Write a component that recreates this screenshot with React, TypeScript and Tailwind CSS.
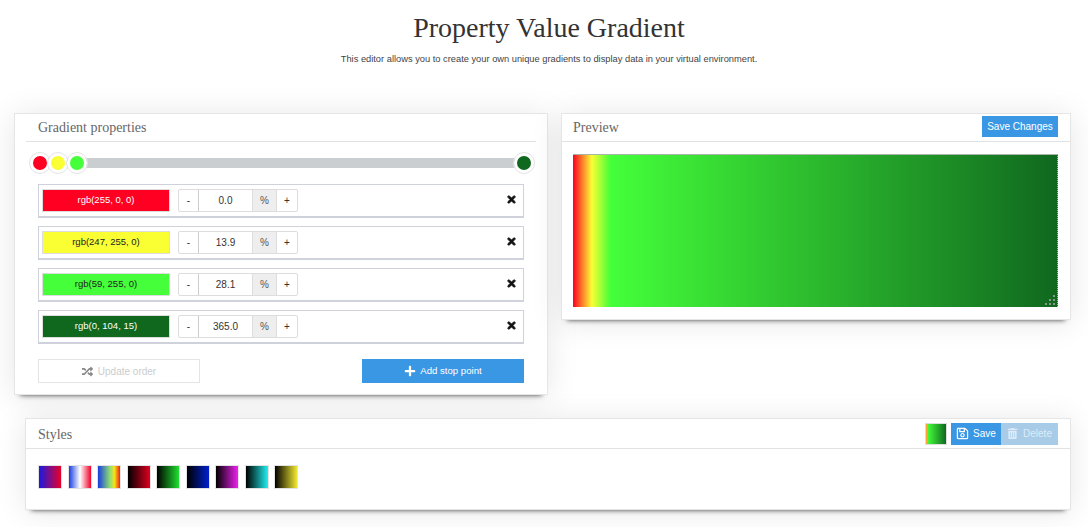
import { FaPlus, FaRandom, FaRegSave, FaTimes, FaTrashAlt } from "react-icons/fa";

const stops = [
  { color: "rgb(255, 0, 0)", bg: "bg-[#ff0022]", text: "text-white", value: "0.0" },
  { color: "rgb(247, 255, 0)", bg: "bg-[#f9ff33]", text: "text-[#222]", value: "13.9" },
  { color: "rgb(59, 255, 0)", bg: "bg-[#44ff3a]", text: "text-[#222]", value: "28.1" },
  { color: "rgb(0, 104, 15)", bg: "bg-[#10681f]", text: "text-white", value: "365.0" },
];

const mainGradient = "linear-gradient(to right, #ff0022 0%, #f9ff33 3.9%, #44ff3a 7.7%, #10681f 100%)";

const styles = [
  "linear-gradient(to right, #1a1ae0, #e8002a)",
  "linear-gradient(to right, #1a3de0, #ffffff 50%, #f0002a)",
  "linear-gradient(to right, #1a3de0, #90e070 55%, #f5e020 75%, #f02010)",
  "linear-gradient(to right, #000000, #e00020)",
  "linear-gradient(to right, #000000, #20e030)",
  "linear-gradient(to right, #000000, #0020d0)",
  "linear-gradient(to right, #000000, #f020f0)",
  "linear-gradient(to right, #000000, #20f0f0)",
  "linear-gradient(to right, #000000, #f0e830)",
];

const panel =
  "bg-white border border-[#e6e6e6] shadow-[0_6px_5px_-6px_rgba(0,0,0,0.75),0_2px_30px_rgba(0,0,0,0.1)]";
const heading = "font-['Liberation_Serif',serif] text-[14px] text-[#666]";

function Handle({ bg, x }: { bg: string; x: string }) {
  return (
    <span
      className={`absolute top-1/2 -translate-y-1/2 w-[20px] h-[20px] rounded-full border-[3px] border-white outline outline-[#e4e4e4] ${bg} ${x}`}
    />
  );
}

export default function App() {
  return (
    <div className="w-[1088px] h-[527px] overflow-hidden bg-white font-['Liberation_Sans',sans-serif]">
      <div className="flex flex-col items-center pt-[10px] pl-[10px]">
        <h1 className="font-['Liberation_Serif',serif] text-[28px] leading-[36px] text-[#333]">
          Property Value Gradient
        </h1>
        <p className="mt-[6px] text-[9.3px] leading-[14px] text-[#444]">
          This editor allows you to create your own unique gradients to display data in your virtual environment.
        </p>
      </div>

      <div className="flex items-start gap-[13px] pl-[14px] mt-[47px]">
        {/* gradient properties */}
        <section className={`${panel} w-[534px] h-[282px] px-[11px]`}>
          <div className={`${heading} h-[28px] pl-[12px] pt-[5px] leading-[18px] border-b border-[#e2e2e2]`}>
            Gradient properties
          </div>
          <div className="relative h-[10px] mt-[16px] ml-[14px] mr-[13px] bg-[#cbced1] rounded-sm">
            <Handle bg="bg-[#ff0022]" x="left-[-10px]" />
            <Handle bg="bg-[#f9ff33]" x="left-[8px]" />
            <Handle bg="bg-[#44ff3a]" x="left-[27px]" />
            <Handle bg="bg-[#10681f]" x="right-[-11px]" />
          </div>

          <div className="flex flex-col gap-[8px] mt-[16px] mx-[12px]">
            {stops.map((s) => (
              <div
                key={s.color}
                className="flex items-center h-[34px] pl-[3px] pr-[6px] border border-[#cfd2da] border-b-2"
              >
                <div
                  className={`w-[128px] h-[23px] flex items-center justify-center text-[9.5px] border border-[#ddd] ${s.bg} ${s.text}`}
                >
                  {s.color}
                </div>
                <div className="flex ml-[8px] h-[23px] w-[120px] border border-[#ddd] rounded-[2px] text-[10px] text-[#333]">
                  <span className="w-[20px] flex items-center justify-center border-r border-[#ccc]">-</span>
                  <span className="w-[53px] flex items-center justify-center">{s.value}</span>
                  <span className="w-[25px] flex items-center justify-center bg-[#eee] border-x border-[#ddd] text-[#555]">
                    %
                  </span>
                  <span className="flex-1 flex items-center justify-center">+</span>
                </div>
                <FaTimes className="ml-auto mt-[-2px] text-[11px] text-[#111] stroke-[40px]" />
              </div>
            ))}
          </div>

          <div className="flex justify-between mt-[15px] mx-[12px]">
            <button className="w-[162px] h-[24px] flex items-center justify-center gap-[5px] border border-[#e4e4e4] text-[10px] text-[#ccc]">
              <FaRandom className="text-[11px] text-[#888]" />
              Update order
            </button>
            <button className="w-[162px] h-[24px] flex items-center justify-center gap-[4px] bg-[#3a97e4] text-[9.6px] text-white">
              <FaPlus className="text-[12px]" />
              Add stop point
            </button>
          </div>
        </section>

        {/* preview */}
        <section className={`${panel} w-[510px] h-[207px]`}>
          <div className="flex items-center justify-between h-[28px] pl-[11px] pr-[12px] border-b border-[#e2e2e2]">
            <span className={heading}>Preview</span>
            <button className="w-[76px] h-[21px] mt-[-3px] bg-[#3a97e4] text-[10px] text-white">
              Save Changes
            </button>
          </div>
          <div
            className="relative h-[153px] mt-[12px] ml-[11px] mr-[12px] border-t border-r border-dotted [border-top-style:solid] border-[#aab5aa]"
            style={{ background: mainGradient }}
          >
            <svg className="absolute right-[1px] bottom-[1px]" width="12" height="12" viewBox="0 0 12 12">
              {[
                [10, 2],
                [6, 6],
                [10, 6],
                [2, 10],
                [6, 10],
                [10, 10],
              ].map(([cx, cy]) => (
                <rect key={`${cx}-${cy}`} x={cx - 1} y={cy - 1} width="2" height="2" fill="#8a978c" />
              ))}
            </svg>
          </div>
        </section>
      </div>

      {/* styles */}
      <section className={`${panel} w-[1046px] h-[92px] ml-[25px] mt-[23px]`}>
        <div className="flex items-center justify-between h-[30px] pl-[12px] pr-[12px] border-b border-[#e2e2e2]">
          <span className={`${heading} pt-[2px]`}>Styles</span>
          <div className="flex items-center">
            <span
              className="w-[22px] h-[22px] mr-[4px] border border-[#ddd]"
              style={{ background: mainGradient }}
            />
            <button className="w-[50px] h-[22px] flex items-center justify-center gap-[4px] bg-[#3a97e4] text-[10px] text-white">
              <FaRegSave className="text-[13px]" />
              Save
            </button>
            <button className="w-[57px] h-[22px] flex items-center justify-center gap-[5px] bg-[#a8cbe8] text-[10px] text-[#dcebf7]">
              <FaTrashAlt className="text-[11px]" />
              Delete
            </button>
          </div>
        </div>
        <div className="flex gap-[5.5px] pl-[12px] pt-[16px]">
          {styles.map((g) => (
            <span key={g} className="w-[24px] h-[24px] border border-[#e2e2e2]" style={{ background: g }} />
          ))}
        </div>
      </section>
    </div>
  );
}
